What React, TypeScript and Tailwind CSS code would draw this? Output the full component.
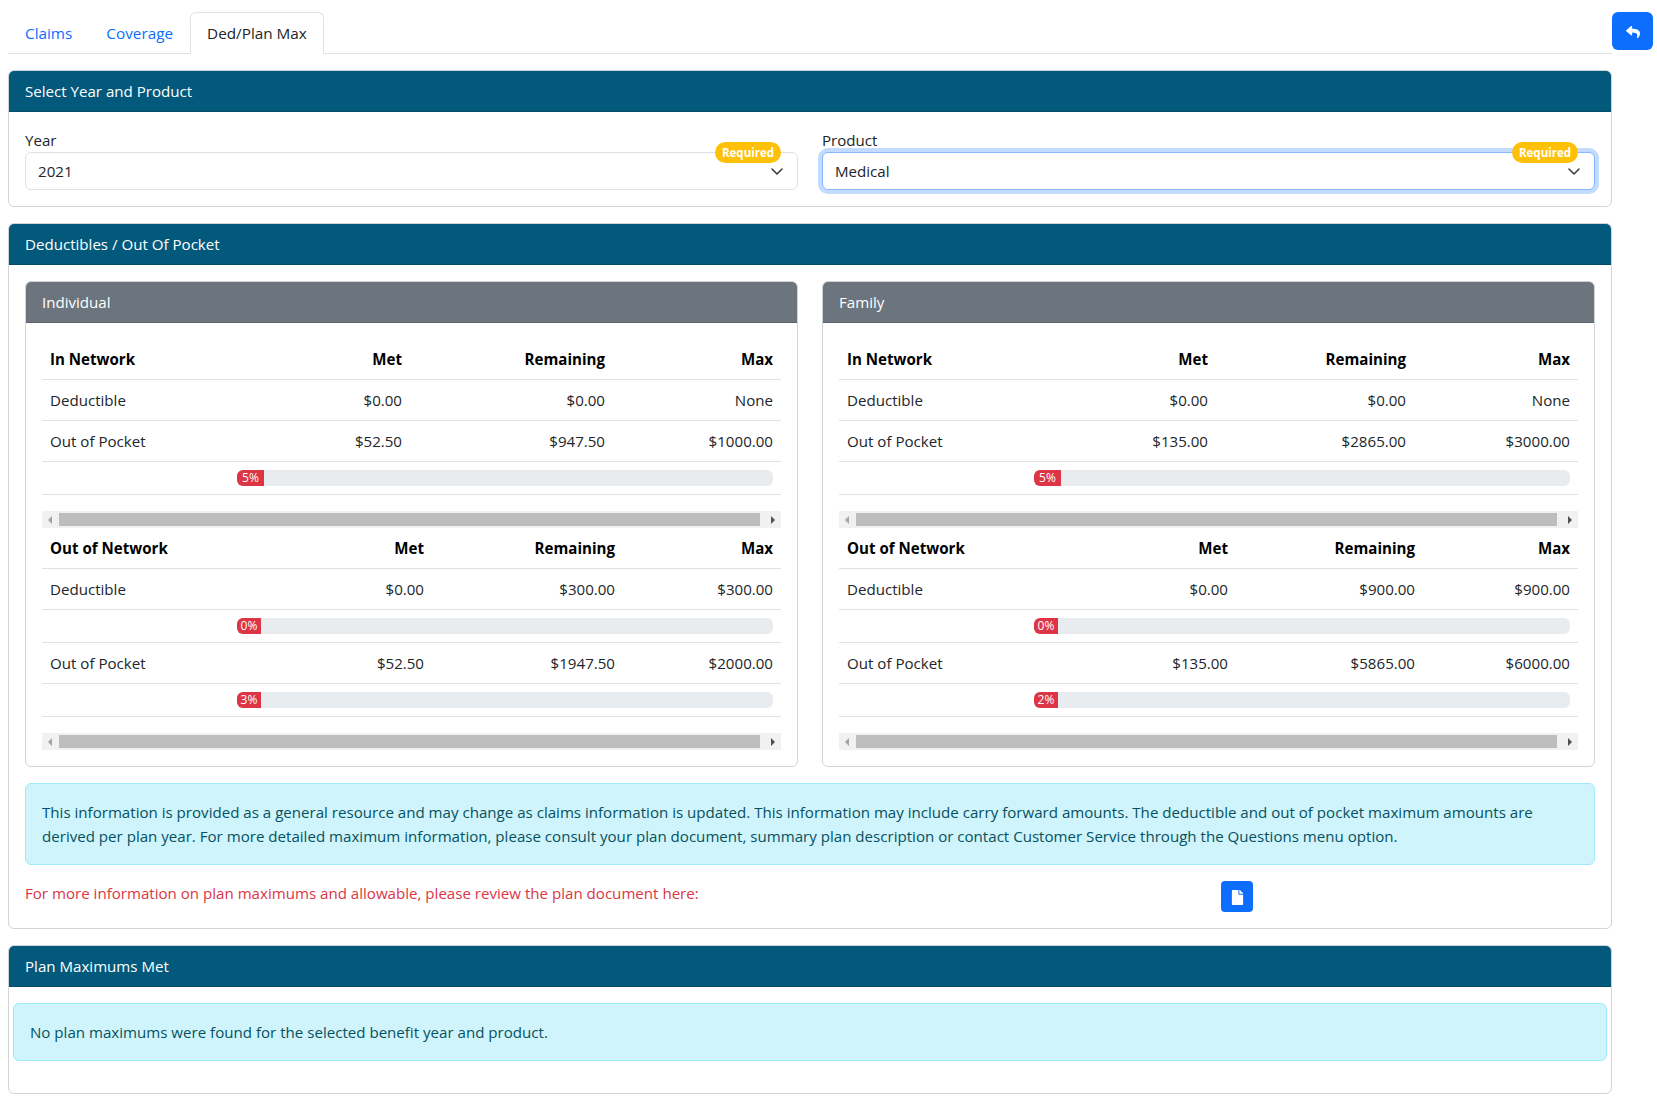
import { Fragment, ReactNode } from 'react'
import { FaFile, FaReply } from 'react-icons/fa'

type Row = { label: string; met: string; remaining: string; max: string; percent?: number }

interface TableData {
  title: string
  metCol: string
  remainingCol: string
  rows: Row[]
}

const individual: TableData[] = [
  {
    title: 'In Network',
    metCol: 'w-[178px]',
    remainingCol: 'w-[203px]',
    rows: [
      { label: 'Deductible', met: '$0.00', remaining: '$0.00', max: 'None' },
      { label: 'Out of Pocket', met: '$52.50', remaining: '$947.50', max: '$1000.00', percent: 5 },
    ],
  },
  {
    title: 'Out of Network',
    metCol: 'w-[200px]',
    remainingCol: 'w-[191px]',
    rows: [
      { label: 'Deductible', met: '$0.00', remaining: '$300.00', max: '$300.00', percent: 0 },
      { label: 'Out of Pocket', met: '$52.50', remaining: '$1947.50', max: '$2000.00', percent: 3 },
    ],
  },
]

const family: TableData[] = [
  {
    title: 'In Network',
    metCol: 'w-[187px]',
    remainingCol: 'w-[198px]',
    rows: [
      { label: 'Deductible', met: '$0.00', remaining: '$0.00', max: 'None' },
      { label: 'Out of Pocket', met: '$135.00', remaining: '$2865.00', max: '$3000.00', percent: 5 },
    ],
  },
  {
    title: 'Out of Network',
    metCol: 'w-[207px]',
    remainingCol: 'w-[187px]',
    rows: [
      { label: 'Deductible', met: '$0.00', remaining: '$900.00', max: '$900.00', percent: 0 },
      { label: 'Out of Pocket', met: '$135.00', remaining: '$5865.00', max: '$6000.00', percent: 2 },
    ],
  },
]

function Card({ title, children }: { title: string; children: ReactNode }) {
  return (
    <section className="rounded-md border border-[#d2d3d4] bg-white">
      <div className="h-[41px] rounded-t-[5px] border-b border-[#024c6a] bg-[#02597c] px-4 py-2 leading-6 text-white">{title}</div>
      {children}
    </section>
  )
}

function SelectField({ label, value, focused }: { label: string; value: string; focused?: boolean }) {
  return (
    <div className="relative flex-1">
      <div className="leading-6 text-[#212529]">{label}</div>
      <div
        className={`flex h-[38px] items-center justify-between rounded-md border bg-white pl-3 pr-[14px] leading-6 text-[#212529] ${
          focused ? 'border-[#86b7fe] shadow-[0_0_0_4px_rgba(13,110,253,0.25)]' : 'border-[#dee2e6]'
        }`}
      >
        {value}
        <svg width="12" height="7" viewBox="0 0 12 7" fill="none" stroke="#343a40" strokeWidth="1.5" strokeLinecap="round" strokeLinejoin="round">
          <path d="M1 1l5 5 5-5" />
        </svg>
      </div>
      <span className="absolute right-[17px] top-[14px] flex h-[21px] w-[66px] items-center justify-center rounded-full bg-[#ffc107] text-[11.5px] font-bold text-white">
        Required
      </span>
    </div>
  )
}

function Progress({ percent }: { percent: number }) {
  return (
    <div className="flex h-4 overflow-hidden rounded-md bg-[#e9ecef]">
      <div
        className="flex min-w-[24px] items-center justify-center bg-[#dc3545] text-xs leading-4 text-white"
        style={{ width: `${percent}%` }}
      >
        {percent}%
      </div>
    </div>
  )
}

function ScrollBar() {
  return (
    <div className="flex h-[17px] items-center bg-[#f1f1f1]">
      <div className="flex w-[17px] justify-center pr-[2px]">
        <svg width="4" height="8" viewBox="0 0 4 8"><path d="M4 0v8L0 4z" fill="#a3a3a3" /></svg>
      </div>
      <div className="h-[13px] flex-1 bg-[#bdbdbd]" />
      <div className="flex w-[21px] justify-center pl-[4px]">
        <svg width="4" height="8" viewBox="0 0 4 8"><path d="M0 0v8l4-4z" fill="#505050" /></svg>
      </div>
    </div>
  )
}

function AmountTable({ data }: { data: TableData }) {
  const th = 'border-b border-[#dee2e6] p-2 text-right font-bold leading-6 text-black'
  const td = 'border-b border-[#dee2e6] p-2 text-right leading-6'
  return (
    <div>
      <table className="mb-4 w-full table-fixed text-[#212529]">
        <colgroup>
          <col className="w-[190px]" />
          <col className={data.metCol} />
          <col className={data.remainingCol} />
          <col />
        </colgroup>
        <thead>
          <tr>
            <th className="border-b border-[#dee2e6] p-2 text-left font-bold leading-6 text-black">{data.title}</th>
            <th className={th}>Met</th>
            <th className={th}>Remaining</th>
            <th className={th}>Max</th>
          </tr>
        </thead>
        <tbody>
          {data.rows.map(row => (
            <Fragment key={row.label}>
              <tr>
                <td className="border-b border-[#dee2e6] p-2 leading-6">{row.label}</td>
                <td className={td}>{row.met}</td>
                <td className={td}>{row.remaining}</td>
                <td className={td}>{row.max}</td>
              </tr>
              {row.percent !== undefined && (
                <tr>
                  <td colSpan={4} className="border-b border-[#dee2e6] py-2 pl-[195px] pr-2">
                    <Progress percent={row.percent} />
                  </td>
                </tr>
              )}
            </Fragment>
          ))}
        </tbody>
      </table>
      <ScrollBar />
    </div>
  )
}

function SubCard({ title, tables }: { title: string; tables: TableData[] }) {
  return (
    <section className="flex-1 rounded-md border border-[#d2d3d4] bg-white">
      <div className="h-[41px] rounded-t-[5px] border-b border-[#5d646b] bg-[#6c757d] px-4 py-2 leading-6 text-white">{title}</div>
      <div className="p-4">
        {tables.map(t => (
          <AmountTable key={t.title} data={t} />
        ))}
      </div>
    </section>
  )
}

export default function App() {
  return (
    <div className="min-h-[1106px] bg-white pl-2 pr-[4px] pt-3 font-['Open_Sans',sans-serif] text-[15.1px]">
      <div className="flex">
        <div className="flex h-[42px] flex-1 border-b border-[#dee2e6] text-[15.3px]">
          <a className="h-[41px] px-[17px] pt-[9px] leading-6 text-[#0d6efd]">Claims</a>
          <a className="h-[41px] px-[17px] pt-[9px] leading-6 text-[#0d6efd]">Coverage</a>
          <a className="h-[42px] rounded-t-md border border-[#dee2e6] border-b-white bg-white px-4 pt-2 leading-6 text-[#212529]">Ded/Plan Max</a>
        </div>
        <button className="flex h-[38px] w-[41px] items-center justify-center rounded-md bg-[#0d6efd] pt-[2px] text-white">
          <FaReply size={14} />
        </button>
      </div>

      <div className="mr-[41px] mt-4 flex flex-col gap-4">
        <Card title="Select Year and Product">
          <div className="flex gap-6 p-4">
            <SelectField label="Year" value="2021" />
            <SelectField label="Product" value="Medical" focused />
          </div>
        </Card>

        <Card title="Deductibles / Out Of Pocket">
          <div className="p-4">
            <div className="flex gap-6">
              <SubCard title="Individual" tables={individual} />
              <SubCard title="Family" tables={family} />
            </div>
            <div className="mt-4 rounded-md border border-[#9eeaf9] bg-[#cff4fc] p-4 leading-6 text-[#055160]">
              This information is provided as a general resource and may change as claims information is updated. This information may include carry forward amounts. The deductible and out of pocket maximum amounts are derived per plan year. For more detailed maximum information, please consult your plan document, summary plan description or contact Customer Service through the Questions menu option.
            </div>
            <div className="mt-4 grid grid-cols-[1196px_1fr]">
              <div className="leading-6 text-[#dc3545]">For more information on plan maximums and allowable, please review the plan document here:</div>
              <button className="flex h-[31px] w-8 items-center justify-center rounded bg-[#0d6efd] pt-[1px] text-white">
                <FaFile size={15} />
              </button>
            </div>
          </div>
        </Card>

        <Card title="Plan Maximums Met">
          <div className="px-1 pb-8 pt-4">
            <div className="rounded-md border border-[#9eeaf9] bg-[#cff4fc] p-4 leading-6 text-[#055160]">
              No plan maximums were found for the selected benefit year and product.
            </div>
          </div>
        </Card>
      </div>
    </div>
  )
}
